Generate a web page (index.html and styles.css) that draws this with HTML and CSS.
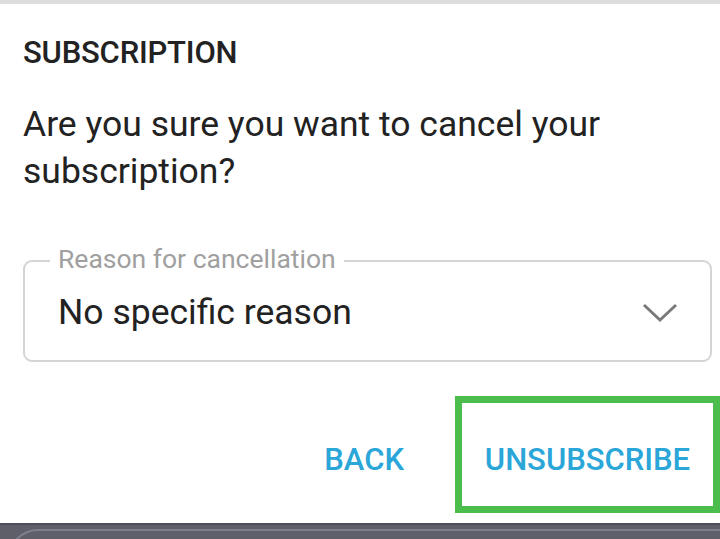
FILE: index.html
```html
<!DOCTYPE html>
<html lang="en">
<head>
    <meta charset="UTF-8">
    <meta name="viewport" content="width=device-width, initial-scale=1.0">
    <title>Subscription</title>
    <link rel="stylesheet" href="styles.css">
</head>
<body>
    <div class="top-strip"></div>

    <div class="dialog">
        <h2 class="title">SUBSCRIPTION</h2>
        <p class="message">Are you sure you want to cancel your subscription?</p>

        <!-- Поле выбора причины -->
        <div class="field">
            <span class="field-label">Reason for cancellation</span>
            <span class="field-value">No specific reason</span>
            <svg class="chevron" width="36" height="20" viewBox="0 0 36 20">
                <path d="M2 2 L18 17 L34 2" fill="none" stroke="#7a7a7a" stroke-width="3"/>
            </svg>
        </div>

        <div class="actions">
            <button class="btn">BACK</button>
            <div class="highlight">
                <button class="btn">UNSUBSCRIBE</button>
            </div>
        </div>
    </div>

    <div class="bottom-bar">
        <div class="bottom-inner"></div>
    </div>
</body>
</html>
```

FILE: styles.css
```css
/* Основные стили */
body {
    margin: 0;
    font-family: Roboto, "Liberation Sans", sans-serif;
    background: #fff;
    color: #222;
    width: 720px;
    height: 539px;
    overflow: hidden;
}
.top-strip {
    height: 4px;
    background: #dcdcdc;
}
.dialog {
    height: 519px;
    padding: 0 0 0 23px;
    box-sizing: border-box;
}
.title {
    margin: 0;
    padding-top: 30px;
    font-size: 31px;
    font-weight: 500;
    line-height: 38px;
    letter-spacing: -0.2px;
}
.message {
    margin: 29px 0 0;
    font-size: 35.5px;
    line-height: 47px;
    width: 640px;
}
.field {
    position: relative;
    margin-top: 65px;
    width: 689px;
    height: 102px;
    box-sizing: border-box;
    border: 2px solid #d4d4d4;
    border-radius: 9px;
    display: flex;
    align-items: center;
    padding: 0 34px 0 33px;
}
.field-label {
    position: absolute;
    left: 25px;
    top: -19px;
    padding: 0 8px;
    background: #fff;
    font-size: 26.5px;
    color: #a0a0a0;
}
.field-value {
    flex: 1;
    font-size: 35.5px;
    margin-top: 2px;
}
.chevron {
    margin-right: -2px;
    margin-top: 4px;
}
.actions {
    display: flex;
    justify-content: flex-end;
    align-items: center;
    margin-top: 34px;
}
.btn {
    background: none;
    border: none;
    padding: 0;
    margin-top: 10px;
    font-family: inherit;
    font-size: 31px;
    font-weight: 500;
    color: #2aa6d8;
}
.highlight {
    margin-left: 51px;
    width: 265px;
    height: 117px;
    box-sizing: border-box;
    border: 7px solid #4bbd4c;
    display: flex;
    align-items: center;
    justify-content: center;
}
.bottom-bar {
    height: 20px;
    background: #5e5f68;
    border-top: 2px solid #4d4e58;
}
.bottom-inner {
    margin: 4px 0 0 8px;
    height: 30px;
    border-top: 2px solid #7c7f8c;
    border-left: 2px solid #7c7f8c;
    border-top-left-radius: 30px;
}
```
